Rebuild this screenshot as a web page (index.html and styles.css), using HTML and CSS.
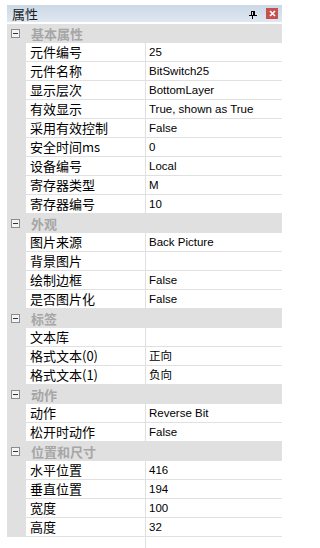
FILE: index.html
```html
<!DOCTYPE html>
<html lang="zh-CN">
<head>
<meta charset="utf-8">
<title>属性</title>
<link rel="stylesheet" href="styles.css">
</head>
<body>
<div class="panel">
  <div class="titlebar">
    <span class="title">属性</span>
    <span class="pin"><svg width="8" height="8" viewBox="0 0 8 8"><path d="M2 0.5H5.5V4M2.5 0.5V4" fill="none" stroke="#000" stroke-width="1"/><rect x="4" y="0" width="2" height="4.5" fill="#000"/><rect x="0" y="4" width="8" height="1" fill="#000"/><rect x="3" y="5" width="1" height="3" fill="#000"/></svg></span>
    <span class="close"><svg width="7" height="7" viewBox="0 0 7 7"><path d="M1 1L6 6M6 1L1 6" stroke="#fff" stroke-width="1.6"/></svg></span>
  </div>
  <div class="grid">
    <div class="cat"><span class="toggle"></span><span class="cat-name">基本属性</span></div>
    <div class="row"><div class="name">元件编号</div><div class="value">25</div></div>
    <div class="row"><div class="name">元件名称</div><div class="value">BitSwitch25</div></div>
    <div class="row"><div class="name">显示层次</div><div class="value">BottomLayer</div></div>
    <div class="row"><div class="name">有效显示</div><div class="value">True, shown as True</div></div>
    <div class="row"><div class="name">采用有效控制</div><div class="value">False</div></div>
    <div class="row"><div class="name">安全时间ms</div><div class="value">0</div></div>
    <div class="row"><div class="name">设备编号</div><div class="value">Local</div></div>
    <div class="row"><div class="name">寄存器类型</div><div class="value">M</div></div>
    <div class="row"><div class="name">寄存器编号</div><div class="value">10</div></div>

    <div class="cat"><span class="toggle"></span><span class="cat-name">外观</span></div>
    <div class="row"><div class="name">图片来源</div><div class="value">Back Picture</div></div>
    <div class="row"><div class="name">背景图片</div><div class="value"></div></div>
    <div class="row"><div class="name">绘制边框</div><div class="value">False</div></div>
    <div class="row"><div class="name">是否图片化</div><div class="value">False</div></div>

    <div class="cat"><span class="toggle"></span><span class="cat-name">标签</span></div>
    <div class="row"><div class="name">文本库</div><div class="value"></div></div>
    <div class="row"><div class="name">格式文本(0)</div><div class="value">正向</div></div>
    <div class="row"><div class="name">格式文本(1)</div><div class="value">负向</div></div>

    <div class="cat"><span class="toggle"></span><span class="cat-name">动作</span></div>
    <div class="row"><div class="name">动作</div><div class="value">Reverse Bit</div></div>
    <div class="row"><div class="name">松开时动作</div><div class="value">False</div></div>

    <div class="cat"><span class="toggle"></span><span class="cat-name">位置和尺寸</span></div>
    <div class="row"><div class="name">水平位置</div><div class="value">416</div></div>
    <div class="row"><div class="name">垂直位置</div><div class="value">194</div></div>
    <div class="row"><div class="name">宽度</div><div class="value">100</div></div>
    <div class="row"><div class="name">高度</div><div class="value">32</div></div>
  </div>
  <div class="filler"></div>
</div>
</body>
</html>
```
FILE: styles.css
```css
html, body {
  margin: 0;
  padding: 0;
  background: #ffffff;
}
body {
  font-family: "Liberation Sans", "Noto Sans CJK SC", sans-serif;
  font-size: 12px;
  color: #000;
  overflow: hidden;
}
.panel {
  width: 275px;
  margin: 5px 0 0 7px;
}
.titlebar {
  height: 17px;
  display: flex;
  align-items: center;
  background: linear-gradient(#cbd8e6, #dfe8f1);
  margin-bottom: 2px;
}
.title {
  font-family: "Noto Sans CJK SC", sans-serif;
  font-size: 13px;
  color: #1e1e1e;
  padding-left: 5px;
  flex: 1;
  line-height: 17px;
}
.pin {
  width: 8px;
  height: 8px;
  display: flex;
  margin-right: 9px;
  margin-top: 2px;
}
.close {
  width: 12px;
  height: 11px;
  background: #c75050;
  display: flex;
  align-items: center;
  justify-content: center;
  margin-right: 4px;
}
.grid {
  background: #e0e0e0;
}
.cat {
  height: 19px;
  display: flex;
  align-items: center;
}
.toggle {
  box-sizing: border-box;
  width: 9px;
  height: 9px;
  border: 1px solid #8c8c8c;
  background: #f4f4f4;
  margin-left: 4px;
  display: flex;
  align-items: center;
  justify-content: center;
}
.toggle::after {
  content: "";
  width: 5px;
  height: 1px;
  background: #333;
}
.cat-name {
  font-family: "Noto Sans CJK SC", sans-serif;
  font-size: 13px;
  font-weight: bold;
  color: #a6a6a6;
  margin-left: 11px;
  line-height: 18px;
}
.row {
  display: flex;
  height: 18px;
  margin-left: 19px;
  border-bottom: 1px solid #e0e0e0;
}
.name {
  box-sizing: border-box;
  width: 120px;
  background: #fff;
  border-right: 1px solid #e0e0e0;
  padding-left: 4px;
  font-family: "Noto Sans CJK SC", sans-serif;
  font-size: 13px;
  line-height: 18px;
  white-space: nowrap;
  overflow: hidden;
}
.value {
  flex: 1;
  background: #fff;
  padding-left: 3px;
  font-size: 11.5px;
  line-height: 18px;
  white-space: nowrap;
  overflow: hidden;
}
.filler {
  height: 20px;
  margin-left: 138px;
  border-left: 1px solid #e0e0e0;
}
```
